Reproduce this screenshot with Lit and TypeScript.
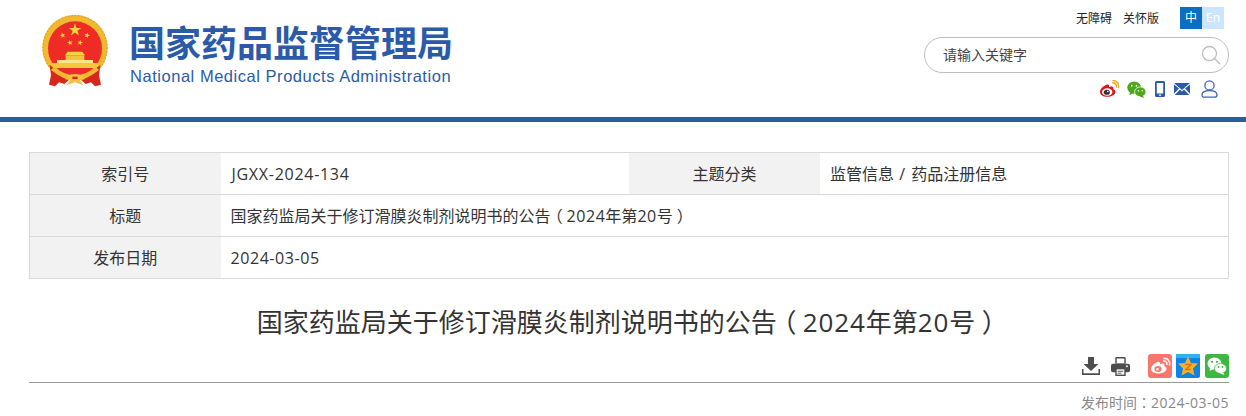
import { LitElement, html, css, svg } from "lit";
import { customElement } from "lit/decorators.js";

const star = (cx: number, cy: number, r: number, rot = 0) => {
  const pts: string[] = [];
  for (let i = 0; i < 10; i++) {
    const rr = i % 2 ? r * 0.382 : r;
    const a = ((-90 + rot + i * 36) * Math.PI) / 180;
    pts.push(`${(cx + rr * Math.cos(a)).toFixed(1)},${(cy + rr * Math.sin(a)).toFixed(1)}`);
  }
  return svg`<polygon points=${pts.join(" ")} fill="#f7d33c" />`;
};

const emblem = html`<svg class="emblem" viewBox="0 0 240 240" width="80" height="80">
  <circle cx="120" cy="113" r="98" fill="#f0b92f"/>
  <circle cx="120" cy="113" r="96" fill="none" stroke="#e3a326" stroke-width="4" stroke-dasharray="5 5"/>
  <circle cx="120" cy="115" r="81" fill="#ee2b24"/>
  ${star(120, 60, 20)}${star(83, 76, 9, -15)}${star(156, 76, 9, 15)}${star(105, 98, 9, -10)}${star(135, 98, 9, 10)}
  <path d="M98 125 H142 L150 136 H90Z" fill="#f7d33c"/>
  <rect x="92" y="136" width="56" height="14" fill="#f6c23c"/>
  <rect x="66" y="150" width="108" height="9" fill="#fbe38a"/>
  <rect x="50" y="159" width="140" height="15" fill="#f6c73a"/>
  <path d="M44 165 L72 186 L104 208 L88 222 L72 217 L60 229 L42 224 L48 196Z" fill="#d9261c"/>
  <path d="M196 165 L168 186 L136 208 L152 222 L168 217 L180 229 L198 224 L192 196Z" fill="#d9261c"/>
  <path d="M56 172 Q84 196 120 199 Q156 196 184 172 L192 180 Q156 210 120 212 Q84 210 48 180Z" fill="#f0b92f"/>
  <path d="M96 198 Q120 186 144 198 L150 208 L134 210 L146 226 L120 217 L94 226 L106 210 L90 208Z" fill="#f3c33f"/>
  <path d="M112 200h16v7h-16z" fill="#d9261c"/>
</svg>`;

const iconWeibo = html`<svg class="wb" viewBox="0 0 22 20" width="20" height="18">
  <path d="M9 5C5 6 1 10 1 13.2 1 16.6 5 18.6 9.4 18.6c5 0 8.8-2.8 8.8-5.6 0-1.8-1.6-2.6-2.6-2.8.6-1.6.2-3-1.8-3-1 0-2 .4-3 .8C11.6 6 11 4.600 9 5Z" fill="#d9141c"/>
  <ellipse cx="9" cy="13.400" rx="5.800" ry="4.100" fill="#fff"/>
  <ellipse cx="8.600" cy="13.600" rx="3.400" ry="2.900" fill="#333"/>
  <circle cx="9.600" cy="12.800" r=".9" fill="#fff"/>
  <path d="M14.500 3.200C17 2.600 20 5 19.200 8.400M14.800 .8C19 0 23 4 21.300 9" fill="none" stroke="#f0a81e" stroke-width="1.600"/>
</svg>`;
const iconWechat = html`<svg class="wc" viewBox="0 0 20 18" width="19" height="17">
  <ellipse cx="7.500" cy="7" rx="7.300" ry="6.500" fill="#4ea71b"/>
  <path d="M3 11 2.600 15 7 12.500Z" fill="#4ea71b"/>
  <ellipse cx="14" cy="11.500" rx="6" ry="5.200" fill="#4ea71b" stroke="#fff" stroke-width=".8"/>
  <path d="M16.500 15 18 18 13.500 16.500Z" fill="#4ea71b"/>
  <circle cx="5" cy="5" r="1" fill="#fff"/><circle cx="10" cy="5" r="1" fill="#fff"/>
  <circle cx="12" cy="10.300" r=".85" fill="#fff"/><circle cx="16" cy="10.300" r=".85" fill="#fff"/>
</svg>`;
const iconPhone = html`<svg class="ph" viewBox="0 0 10 16" width="10" height="16">
  <rect x="0" y="0" width="10" height="16" rx="1.500" fill="#2b5ba8"/>
  <rect x="1.800" y="2" width="6.400" height="10.500" fill="#fff"/>
  <circle cx="5" cy="14.200" r=".9" fill="#fff"/>
</svg>`;
const iconMail = html`<svg class="ml" viewBox="0 0 16 12" width="16" height="12">
  <path d="M0 0H16L8 7Z M0 1.400V10.800L5 5.600Z M16 1.400V10.800L11 5.600Z M.8 12H15.200L10 6.600 8 8.400 6 6.600Z" fill="#2b5ba8"/>
</svg>`;
const iconUser = html`<svg class="us" viewBox="0 0 17 18" width="17" height="18">
  <circle cx="8.500" cy="5.400" r="4.600" fill="none" stroke="#3f63ab" stroke-width="1.300"/>
  <path d="M1 15C1 12 4 10.700 8.500 10.700S16 12 16 15C16 16.800 14.800 17.200 13.500 17.200H3.500C2.200 17.200 1 16.800 1 15Z" fill="none" stroke="#3f63ab" stroke-width="1.300"/>
</svg>`;
const iconSearch = html`<svg viewBox="0 0 20 20" width="20" height="20">
  <circle cx="8.500" cy="8.500" r="7" fill="none" stroke="#bdbdbd" stroke-width="1.300"/>
  <path d="M13.500 13.500 19 19" stroke="#bdbdbd" stroke-width="1.500"/>
</svg>`;
const iconDownload = html`<svg viewBox="0 0 18 18" width="18" height="18">
  <path d="M6 0H12V7H16.500L9 14 1.500 7H6Z" fill="#4d4d4d"/>
  <path d="M0 12V18H18V12H16.500V16.300H1.500V12Z" fill="#4d4d4d"/>
</svg>`;
const iconPrint = html`<svg viewBox="0 0 20 20" width="19" height="19">
  <path d="M4.500 7V1.500C4.500 .7 5 0 6 0H14C15 0 15.500 .7 15.500 1.500V7Z" fill="#4d4d4d"/>
  <rect x="6" y="1.600" width="8" height="5" fill="#fff"/>
  <rect x="0" y="7" width="20" height="9" rx="2" fill="#4d4d4d"/>
  <circle cx="16.800" cy="9.700" r="1" fill="#fff"/>
  <path d="M4.500 12H15.500V20H4.500Z" fill="#4d4d4d"/>
  <rect x="6" y="13" width="8" height="5.500" fill="#fff"/>
  <path d="M7 15H13M7 17H11" stroke="#4d4d4d"/>
</svg>`;
const tileWeibo = html`<svg viewBox="0 0 24 24" width="24" height="24">
  <rect width="24" height="24" rx="3" fill="#f9776a"/>
  <path d="M9.500 8C6 9 3 12.500 3 15c0 3 4 4.500 7.500 4.500 4.500 0 8-2.300 8-5 0-1.500-1.300-2-2.200-2.300.5-1.400 0-2.700-1.600-2.600-1 0-1.900.4-2.700.7C12 8.500 11.500 7.500 9.500 8Z" fill="#fff"/>
  <ellipse cx="10" cy="15" rx="3.600" ry="3" fill="#f9776a"/>
  <circle cx="9.500" cy="15.200" r="1.300" fill="#fff"/>
  <path d="M15 7c2.500-.6 4.500 1.400 4 4M15.500 4.500c4-.8 7 2.800 6 7" fill="none" stroke="#fff" stroke-width="1.500"/>
</svg>`;
const tileQzone = html`<svg viewBox="0 0 24 24" width="24" height="24">
  <rect width="24" height="24" rx="2" fill="#0d83e6"/>
  <rect width="24" height="4" fill="#30b0f5"/>
  <polygon points="12,2.500 15,9 22,9.500 17,14.500 18.500,21.500 12,18 5.500,21.500 7,14.500 2,9.500 9,9" fill="#f6b11d"/>
  <path d="M9 10.500h6L10 15.500h5" fill="none" stroke="#d8791a" stroke-width="1.500"/>
</svg>`;
const tileWechat = html`<svg viewBox="0 0 24 24" width="24" height="24">
  <rect width="24" height="24" rx="3" fill="#3cb83f"/>
  <ellipse cx="9.500" cy="9.500" rx="7" ry="6" fill="#fff"/>
  <path d="M5 13.500 4.500 17 9 15Z" fill="#fff"/>
  <ellipse cx="15.500" cy="14.500" rx="6" ry="5" fill="#fff" stroke="#3cb83f" stroke-width=".8"/>
  <path d="M18 18 19.500 21 15 19.500Z" fill="#fff"/>
  <circle cx="7" cy="7.800" r="1.100" fill="#3cb83f"/><circle cx="12" cy="7.800" r="1.100" fill="#3cb83f"/>
  <circle cx="13.500" cy="13" r=".9" fill="#3cb83f"/><circle cx="17.500" cy="13" r=".9" fill="#3cb83f"/>
</svg>`;

const docTitle = html`国家药监局关于修订滑膜炎制剂说明书的公告<span class="po">（</span><span class="n">2024</span>年第<span class="n">20</span>号<span class="pc">）</span>`;

@customElement("app-root")
export class AppRoot extends LitElement {
  static styles = css`
    :host {
      display: block;
      width: 1246px;
      height: 416px;
      overflow: hidden;
      background: #fff;
      font-family: "Open Sans", "Noto Sans CJK SC", sans-serif;
      color: #333;
    }
    svg { display: block; flex: none; }
    .n { letter-spacing: 0.035em; }
    .code { letter-spacing: 0.045em; margin-left: 1px; }
    .sl { letter-spacing: 1px; }
    .po, .pc { font-feature-settings: "halt"; }
    .po { padding: 0 0.24em 0 0.26em; }
    .pc { padding: 0 0.25em 0 0.25em; }
    .header {
      box-sizing: content-box;
      height: 117px;
      border-bottom: 5px solid #2b5ba8;
      display: flex;
      justify-content: space-between;
    }
    .brand { display: flex; padding: 10px 0 0 35px; align-items: flex-start; }
    .brand-text { margin: 9px 0 0 14px; }
    .brand-cn {
      font: 700 36px/44px "Noto Sans CJK SC", sans-serif;
      color: #2b5ba8;
      white-space: nowrap;
    }
    .brand-en {
      font: 400 16.500px/22px "Liberation Sans", Arial, sans-serif;
      color: #2b5ba8;
      white-space: nowrap;
      margin: 2px 0 0 1px;
      letter-spacing: 0.53px;
    }
    .tools {
      width: 305px;
      margin-right: 17px;
      display: flex;
      flex-direction: column;
      align-items: flex-end;
    }
    .top { display: flex; align-items: center; padding: 7px 5px 0 0; height: 22px; }
    .top a { font: 12px/22px "Noto Sans CJK SC", sans-serif; color: #222; margin-right: 11px; }
    .lang { display: flex; margin-left: 10px; }
    .lang span { width: 22px; height: 22px; font: 12px/22px "Open Sans", "Noto Sans CJK SC", sans-serif; text-align: center; color: #fff; }
    .zh { background: #0a6fc2; }
    .en { background: #cce5ff; }
    .search {
      box-sizing: border-box;
      width: 305px;
      height: 36px;
      margin-top: 8px;
      border: 1px solid #bdbdbd;
      border-radius: 18px;
      display: flex;
      align-items: center;
      justify-content: space-between;
      padding: 0 7px 0 18px;
      font: 14px/20px "Noto Sans CJK SC", sans-serif;
      color: #444;
    }
    .search span { margin-top: -2px; }
    .social { display: flex; align-items: center; margin-top: 6px; padding-right: 11px; height: 20px; }
    .wc { margin-left: 8px; }
    .ph { margin-left: 9px; }
    .ml { margin-left: 9px; }
    .us { margin-left: 11px; }
    main { padding: 30px 17px 0 29px; }
    table {
      width: 1200px;
      border-collapse: collapse;
      table-layout: fixed;
      border: 1px solid #d9d9d9;
      font: 16px/20px "Open Sans", "Noto Sans CJK SC", sans-serif;
      color: #333;
    }
    td { height: 42px; padding: 1px 10px 0; box-sizing: border-box; border-bottom: 1px solid #d9d9d9; }
    tr:last-child td { border-bottom: 0; }
    .label { width: 191px; background: #f2f2f2; text-align: center; }
    .title {
      font: 26px/38px "Open Sans", "Noto Sans CJK SC", sans-serif;
      color: #333;
      text-align: center;
      margin: 24px 0 0;
      font-weight: 400;
      white-space: nowrap;
    }
    .actions {
      display: flex;
      justify-content: flex-end;
      align-items: flex-start;
      box-sizing: border-box;
      height: 32px;
      padding-top: 3px;
      margin-top: 10px;
      border-bottom: 1px solid #999;
    }
    .dl { margin: 3px 11px 0 0; }
    .pr { margin: 3px 18px 0 0; }
    .tile-a { margin-right: 4px; }
    .tile-b { margin-right: 5px; }
    .date {
      text-align: right;
      font: 14px/20px "Open Sans", "Noto Sans CJK SC", sans-serif;
      color: #888;
      margin-top: 9px;
    }
    .tc { font-family: "Noto Sans CJK TC", sans-serif; }
  `;

  render() {
    return html`
      <div class="header">
        <div class="brand">
          ${emblem}
          <div class="brand-text">
            <div class="brand-cn">国家药品监督管理局</div>
            <div class="brand-en">National Medical Products Administration</div>
          </div>
        </div>
        <div class="tools">
          <div class="top">
            <a>无障碍</a><a>关怀版</a>
            <div class="lang"><span class="zh">中</span><span class="en">En</span></div>
          </div>
          <div class="search"><span>请输入关键字</span>${iconSearch}</div>
          <div class="social">${iconWeibo}${iconWechat}${iconPhone}${iconMail}${iconUser}</div>
        </div>
      </div>
      <main>
        <table>
          <tr>
            <td class="label">索引号</td><td><span class="code">JGXX-2024-134</span></td>
            <td class="label">主题分类</td><td>监管信息<span class="sl"> / </span>药品注册信息</td>
          </tr>
          <tr>
            <td class="label">标题</td>
            <td colspan="3">${docTitle}</td>
          </tr>
          <tr>
            <td class="label">发布日期</td><td colspan="3"><span class="n">2024-03-05</span></td>
          </tr>
        </table>
        <h1 class="title">${docTitle}</h1>
        <div class="actions">
          <span class="dl">${iconDownload}</span>
          <span class="pr">${iconPrint}</span>
          <span class="tile-a">${tileWeibo}</span>
          <span class="tile-b">${tileQzone}</span>
          <span>${tileWechat}</span>
        </div>
        <div class="date">发布时间<span class="tc">：</span><span class="n">2024-03-05</span></div>
      </main>
    `;
  }
}
